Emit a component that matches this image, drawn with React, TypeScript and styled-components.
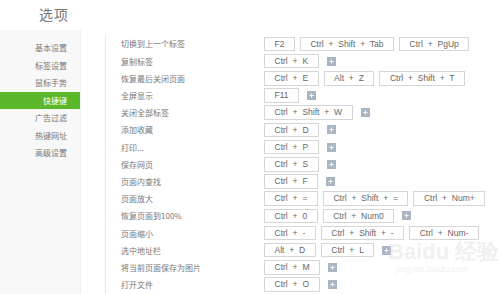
import styled, { createGlobalStyle } from 'styled-components'

/* data */
type Shortcut = {
  label: string
  keys: string[]
  canAdd?: boolean
}

const menuItems = ['基本设置', '标签设置', '鼠标手势', '快捷键', '广告过滤', '热键网址', '高级设置']
const activeMenu = '快捷键'

const shortcuts: Shortcut[] = [
  { label: '切换到上一个标签', keys: ['F2', 'Ctrl + Shift + Tab', 'Ctrl + PgUp'] },
  { label: '复制标签', keys: ['Ctrl + K'], canAdd: true },
  { label: '恢复最后关闭页面', keys: ['Ctrl + E', 'Alt + Z', 'Ctrl + Shift + T'] },
  { label: '全屏显示', keys: ['F11'], canAdd: true },
  { label: '关闭全部标签', keys: ['Ctrl + Shift + W'], canAdd: true },
  { label: '添加收藏', keys: ['Ctrl + D'], canAdd: true },
  { label: '打印...', keys: ['Ctrl + P'], canAdd: true },
  { label: '保存网页', keys: ['Ctrl + S'], canAdd: true },
  { label: '页面内查找', keys: ['Ctrl + F'], canAdd: true },
  { label: '页面放大', keys: ['Ctrl + =', 'Ctrl + Shift + =', 'Ctrl + Num+'] },
  { label: '恢复页面到100%', keys: ['Ctrl + 0', 'Ctrl + Num0'], canAdd: true },
  { label: '页面缩小', keys: ['Ctrl + -', 'Ctrl + Shift + -', 'Ctrl + Num-'] },
  { label: '选中地址栏', keys: ['Alt + D', 'Ctrl + L'], canAdd: true },
  { label: '将当前页面保存为图片', keys: ['Ctrl + M'], canAdd: true },
  { label: '打开文件', keys: ['Ctrl + O'], canAdd: true },
]

const GlobalStyle = createGlobalStyle`
  html, body {
    margin: 0;
    padding: 0;
    background: #fff;
  }
  body {
    font-family: 'Noto Sans CJK SC', 'Noto Sans', sans-serif;
    color: #777;
  }
`

const StyledPage = styled.div`
  width: 500px;
  height: 294px;
  overflow: hidden;
  position: relative;
  display: flex;
  flex-direction: column;
`

const Header = styled.header`
  height: 30px;
  flex-shrink: 0;
  padding: 0 0 3px 39px;
  box-sizing: border-box;
  display: flex;
  align-items: center;

  h1 {
    margin: 0;
    font-size: 14px;
    font-weight: normal;
    color: #777;
    letter-spacing: 1px;
  }
`

const Body = styled.div`
  flex: 1;
  display: flex;
`

const Sidebar = styled.nav`
  width: 80px;
  padding: 9px 0 0;
  background: #f8f8f8;
  border-right: 1px solid #efefef;
  flex-shrink: 0;
`

const MenuItem = styled.div<{ $active?: boolean }>`
  height: 17.5px;
  padding: 0 13px 0 0;
  font-size: 8px;
  line-height: 17.5px;
  text-align: right;
  color: ${(props) => (props.$active ? '#fff' : '#777')};
  background: ${(props) => (props.$active ? '#5cb82b' : 'transparent')};
`

const Content = styled.main`
  margin: 5px 0 0 24px;
  padding: 0 0 0 15px;
  border-left: 1px solid #e8e8e8;
  flex: 1;
`

const Row = styled.div`
  height: 17.2px;
  display: flex;
  align-items: center;

  &:first-child {
    margin-top: 0.4px;
  }

  .label {
    width: 143px;
    flex-shrink: 0;
    font-size: 8px;
    color: #777;
    white-space: nowrap;
  }

  .keys {
    display: flex;
    align-items: center;
    gap: 5px;
  }
`

const KeyBox = styled.span`
  height: 14.5px;
  box-sizing: border-box;
  padding: 0 9.5px;
  border: 1px solid #d6d6d6;
  background: #fff;
  font-family: 'Liberation Sans', Arial, sans-serif;
  font-size: 8.5px;
  line-height: 12.5px;
  color: #666;
  word-spacing: 2.5px;
  white-space: nowrap;
`

const AddButton = styled.span`
  width: 9px;
  height: 9px;
  margin: 0 0 0 3px;
  background: #a9b5c3;
  display: flex;
  align-items: center;
  justify-content: center;

  svg {
    display: block;
  }
`

const Watermark = styled.div`
  position: absolute;
  left: 388px;
  top: 240px;
  color: rgba(215, 215, 215, 0.4);
  font-family: 'Liberation Sans', Arial, sans-serif;
  pointer-events: none;

  .brand {
    font-size: 22px;
    font-weight: bold;
    line-height: 24px;
  }

  .site {
    font-size: 9px;
    padding: 0 0 0 8px;
  }
`

const PlusIcon = () => (
  <svg width="5" height="5" viewBox="0 0 5 5">
    <path d="M2.5 0.5v4M0.5 2.5h4" stroke="#fff" strokeWidth="1" />
  </svg>
)

export default function App() {
  return (
    <StyledPage>
      <GlobalStyle />
      <Header>
        <h1>选项</h1>
      </Header>
      <Body>
        <Sidebar>
          {menuItems.map((item) => (
            <MenuItem key={item} $active={item === activeMenu}>
              {item}
            </MenuItem>
          ))}
        </Sidebar>
        <Content>
          {shortcuts.map((s) => (
            <Row key={s.label}>
              <span className="label">{s.label}</span>
              <div className="keys">
                {s.keys.map((k) => (
                  <KeyBox key={k}>{k}</KeyBox>
                ))}
                {s.canAdd && (
                  <AddButton>
                    <PlusIcon />
                  </AddButton>
                )}
              </div>
            </Row>
          ))}
        </Content>
      </Body>
      <Watermark>
        <div className="brand">Baidu 经验</div>
        <div className="site">jingyan.baidu.com</div>
      </Watermark>
    </StyledPage>
  )
}
